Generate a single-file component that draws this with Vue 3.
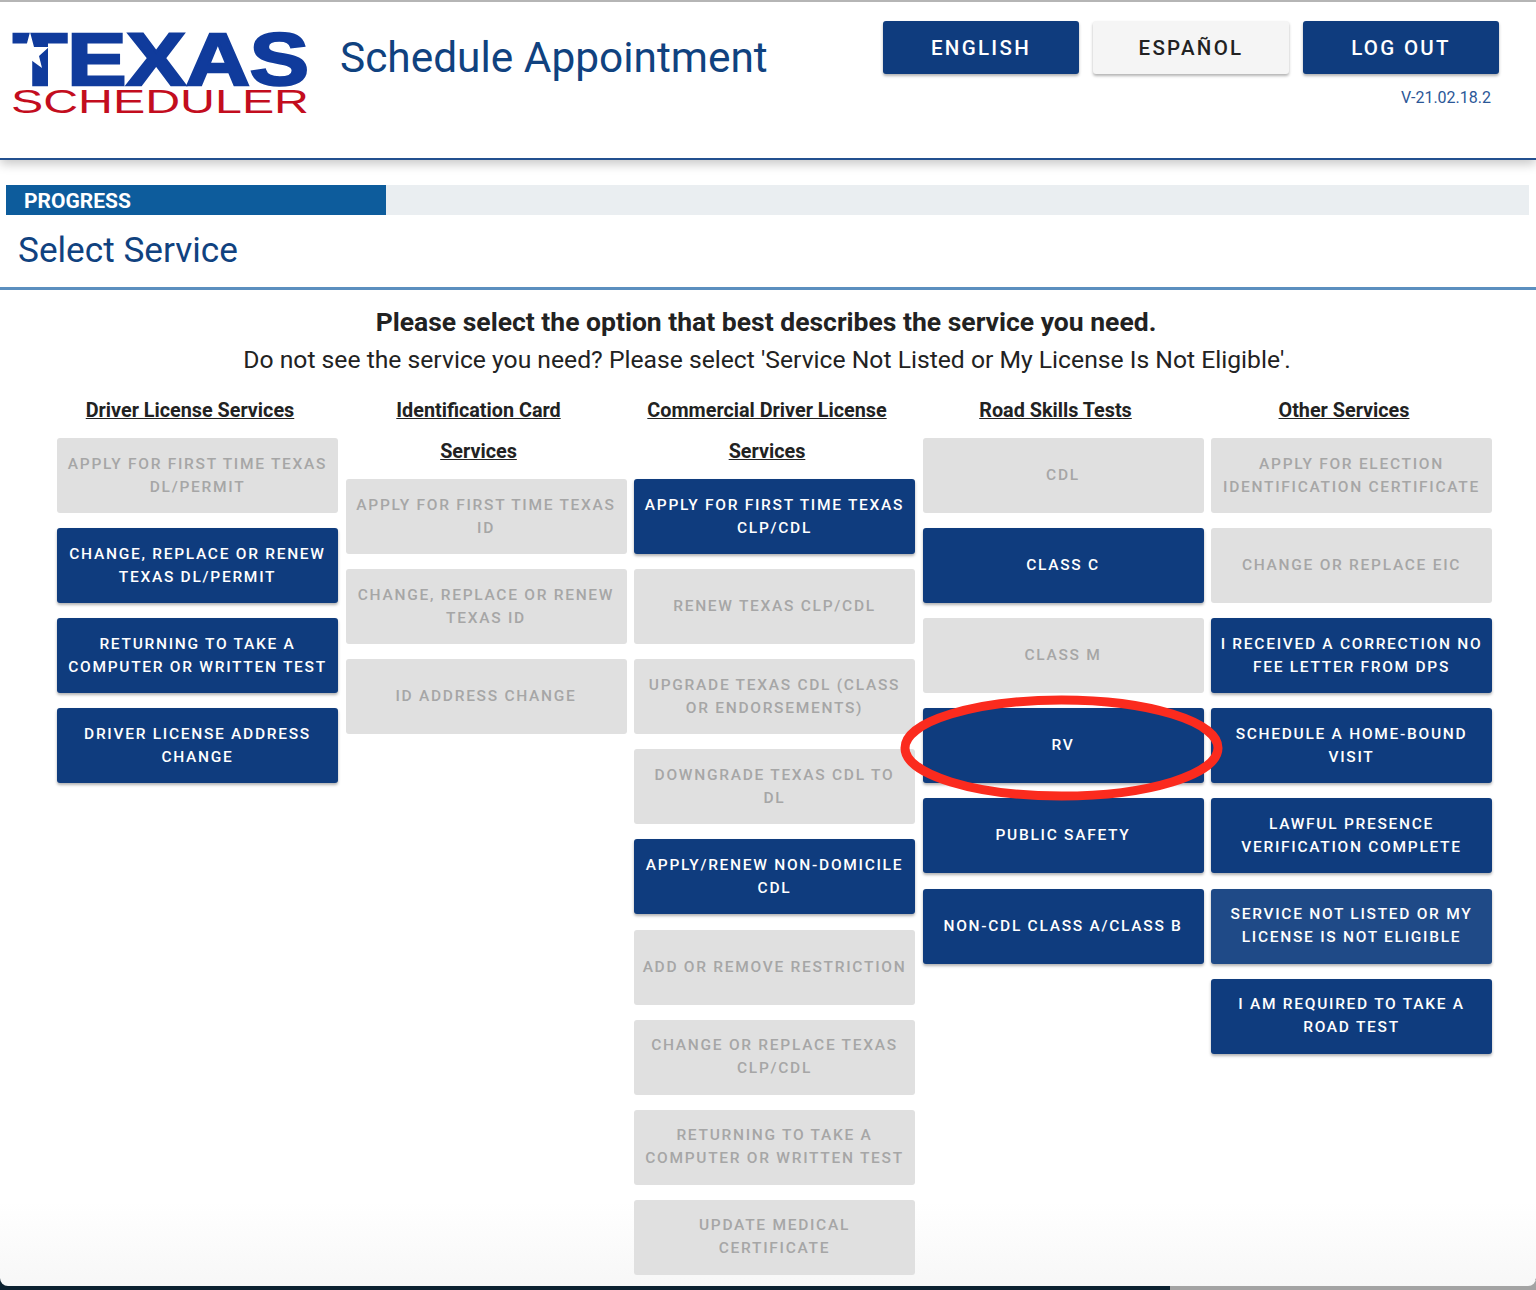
<script setup>
const columns = [
  { title: 'Driver License Services', items: [
    ['Apply for first time Texas DL/Permit', 0],
    ['Change, Replace or Renew Texas DL/Permit', 1],
    ['Returning to take a computer or written test', 1],
    ['Driver License Address Change', 1],
  ]},
  { title: 'Identification Card Services', items: [
    ['Apply for first time Texas ID', 0],
    ['Change, Replace or Renew Texas ID', 0],
    ['ID Address Change', 0],
  ]},
  { title: 'Commercial Driver License Services', items: [
    ['Apply for first time Texas CLP/CDL', 1],
    ['Renew Texas CLP/CDL', 0],
    ['Upgrade Texas CDL (Class or Endorsements)', 0],
    ['Downgrade Texas CDL to DL', 0],
    ['Apply/Renew Non-Domicile CDL', 1],
    ['Add or Remove Restriction', 0],
    ['Change or Replace Texas CLP/CDL', 0],
    ['Returning to take a computer or written test', 0],
    ['Update Medical Certificate', 0],
  ]},
  { title: 'Road Skills Tests', items: [
    ['CDL', 0],
    ['Class C', 1],
    ['Class M', 0],
    ['RV', 1],
    ['Public Safety', 1],
    ['Non-CDL Class A/Class B', 1],
  ]},
  { title: 'Other Services', items: [
    ['Apply for Election Identification Certificate', 0],
    ['Change or Replace EIC', 0],
    ['I received a Correction No Fee letter from DPS', 1],
    ['Schedule a Home-Bound Visit', 1],
    ['Lawful Presence Verification Complete', 1],
    ['Service Not Listed or My License Is Not Eligible', 2],
    ['I am required to take a Road Test', 1],
  ]},
]
</script>

<template>
  <div class="screen">
    <div class="window">
      <header class="top">
        <div class="logo">
          <svg width="300" height="90" viewBox="0 0 300 90">
            <text x="1" y="53" class="logo-texas" textLength="296" lengthAdjust="spacingAndGlyphs">TEXAS</text>
            <polygon points="18,0 22,15 37,15 27,24 30,36 19,28 8,16 14,15" fill="#fff" />
            <text x="-1" y="81" class="logo-sched" textLength="298" lengthAdjust="spacingAndGlyphs">SCHEDULER</text>
          </svg>
        </div>
        <h1 class="title">Schedule Appointment</h1>
        <div class="actions">
          <div class="lang-row">
            <button class="top-btn navy">English</button>
            <button class="top-btn light">Español</button>
            <button class="top-btn navy">Log Out</button>
          </div>
          <div class="version">V-21.02.18.2</div>
        </div>
      </header>

      <div class="progress"><div class="fill">PROGRESS</div></div>
      <h2 class="step">Select Service</h2>
      <div class="divider"></div>

      <p class="lead"><strong>Please select the option that best describes the service you need.</strong></p>
      <p class="sub">Do not see the service you need? Please select 'Service Not Listed or My License Is Not Eligible'.</p>

      <div class="grid">
        <section v-for="col in columns" :key="col.title" class="col">
          <h3 class="col-title"><span>{{ col.title }}</span></h3>
          <button
            v-for="item in col.items"
            :key="item[0]"
            class="svc"
            :class="{ off: item[1] === 0, on: item[1] === 1, hover: item[1] === 2 }"
          >{{ item[0] }}</button>
        </section>
      </div>

      <svg class="ring" width="326" height="108" viewBox="0 0 326 108">
        <ellipse cx="162.5" cy="54" rx="156.5" ry="48" fill="none" stroke="#fb2b1e" stroke-width="9" />
      </svg>
    </div>
    <div class="strip"><span class="strip-right"></span></div>
  </div>
</template>

<style scoped>
.screen { width: 1536px; height: 1290px; background: #0c2130; position: relative; overflow: hidden; font-family: Roboto, "Liberation Sans", sans-serif; }
.window { height: 1286px; background: linear-gradient(#fff 1200px, #f7f7f7 1286px); border-top: 2px solid #b5b5b5; box-sizing: border-box; border-radius: 0 0 8px 8px; position: relative; z-index: 1; overflow: hidden; }
.top { height: 158px; box-sizing: border-box; border-bottom: 2px solid #23508f; box-shadow: 0 4px 10px rgba(0,0,0,.22); display: flex; background: #fff; }
.logo { width: 340px; padding: 30px 0 0 12px; box-sizing: border-box; }
.logo svg { display: block; overflow: visible; }
.logo-texas { font: 700 75px "Liberation Sans", sans-serif; fill: #103b9c; stroke: #103b9c; stroke-width: 2.5px; }
.logo-sched { font: 400 34px "Liberation Sans", sans-serif; fill: #c30d1e; }
.title { margin: 28px 0 0; font-size: 42.4px; line-height: 56px; font-weight: 400; color: #10427f; white-space: nowrap; }
.actions { margin-left: auto; padding: 19px 37px 0 0; display: flex; flex-direction: column; align-items: flex-end; }
.lang-row { display: flex; gap: 14px; }
.top-btn { width: 196px; height: 53px; border: 0; border-radius: 3px; font: 500 20.5px Roboto, sans-serif; letter-spacing: 2.3px; text-transform: uppercase; box-shadow: 0 2px 3px rgba(0,0,0,.3); }
.navy { background: #0f3c7e; color: #fff; }
.light { background: #f5f5f5; color: #222; }
.version { margin: 14px 8px 0 0; font-size: 16px; line-height: 20px; color: #2b5797; }
.progress { margin: 25px 7px 0 6px; height: 30px; background: #eaeef1; }
.fill { width: 380px; height: 30px; background: #0d5c9c; color: #fff; font-size: 21px; font-weight: 700; line-height: 32px; padding-left: 18px; box-sizing: border-box; }
.step { margin: 0; padding-left: 18px; font-size: 35.2px; line-height: 70px; font-weight: 400; color: #10427f; height: 72px; }
.divider { height: 3px; background: #5b8fbf; }
.lead { margin: 15px 0 0; text-align: center; font-size: 26.5px; line-height: 34px; color: #222; width: 1532px; }
.lead strong { font-weight: 700; }
.sub { margin: 4px 0 0; text-align: center; font-size: 24.7px; line-height: 34px; color: #222; width: 1534px; }
.grid { margin: 13px 0 0 50px; display: grid; grid-template-columns: repeat(5, 288.5px); align-items: start; }
.col { display: flex; flex-direction: column; align-items: flex-start; padding-left: 7px; }
.col-title { margin: 0 0 7px -7px; width: 280px; padding: 0 18px; box-sizing: border-box; text-align: center; font-size: 19.8px; line-height: 41px; font-weight: 700; color: #222; text-decoration: underline; }
.svc { width: 281px; height: 75px; margin-bottom: 15.12px; border: 0; border-radius: 3px; padding: 0 8px; font: 500 15.5px/23px Roboto, sans-serif; letter-spacing: 1.72px; text-transform: uppercase; }
.off { background: #e0e0e0; color: #a6a6a6; }
.on { background: #0f3c7e; color: #fff; box-shadow: 0 2px 3px rgba(0,0,0,.3); }
.hover { background: #1f4a87; color: #fff; box-shadow: 0 2px 3px rgba(0,0,0,.3); }
.ring { position: absolute; left: 899px; top: 692px; }
.strip { height: 4px; margin-top: -4px; position: relative; }
.strip-right { position: absolute; left: 1170px; right: 0; top: 0; height: 8px; background: #a3a3a3; }
.screen::before { content: ""; position: absolute; left: 1170px; right: 0; bottom: 0; height: 10px; background: #a3a3a3; }
</style>
